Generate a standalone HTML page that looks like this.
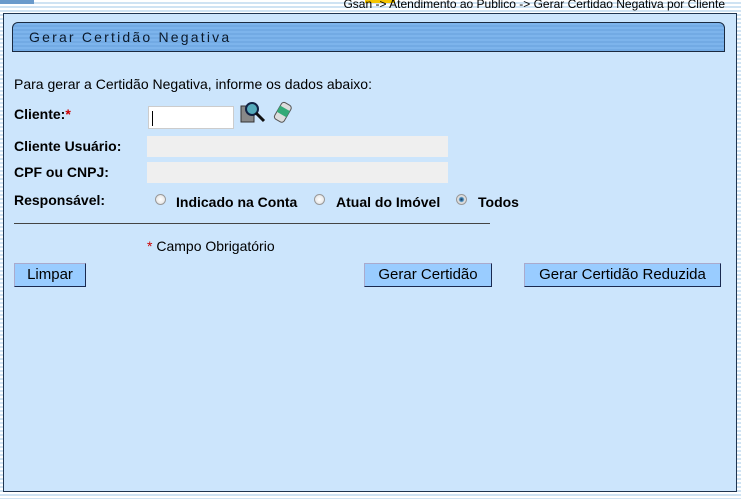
<!DOCTYPE html>
<html><head><meta charset="utf-8"><style>
body{margin:0;width:741px;height:499px;overflow:hidden;font-family:"Liberation Sans",sans-serif;
background:repeating-linear-gradient(to bottom,#fff 0,#fff 2px,#cfe3f3 2px,#cfe3f3 4px);position:relative}
.topbar{position:absolute;left:0;top:0;width:34px;height:4px;background:#6a9acb}
.yel{position:absolute;left:365px;top:0;width:30px;height:3px;background:#f5c400}
.crumb{position:absolute;right:16px;top:-3px;font-size:12px;color:#000;padding:0 0 0 4px;line-height:14px}
.panel{position:absolute;left:3px;top:13px;width:732px;height:477px;background:#cce5fc;border:1px solid #1f3550}
.hdr{position:absolute;left:8px;top:8px;width:711px;height:28px;border:1px solid #1a2a40;border-radius:6px 6px 0 0;
background:repeating-linear-gradient(to bottom,#7db4ec 0,#7db4ec 2px,#72aae4 2px,#72aae4 4px);}
.hdr span{position:absolute;left:16px;top:6px;font-size:14px;letter-spacing:2.2px;color:#0b1a2c}
.t{position:absolute;font-size:14px;color:#000}
.b{font-weight:bold}
.in{position:absolute;background:#efefef;height:21px}
.btn{position:absolute;height:22px;background:#99ccff;border:1px solid #1a2a50;border-top-color:#aac;border-left-color:#aac;font-size:15px;line-height:22px;text-align:center;color:#000}
.rad{position:absolute;width:9px;height:9px;border-radius:50%;border:1px solid #999;background:radial-gradient(#fff,#ddd)}
</style></head><body>
<div class="topbar"></div><div class="yel"></div>
<div class="crumb">Gsan -&gt; Atendimento ao Publico -&gt; Gerar Certidao Negativa por Cliente</div>
<div class="panel">
<div class="hdr"><span>Gerar Certidão Negativa</span></div>
</div>
<div class="t" style="left:14px;top:76px">Para gerar a Certidão Negativa, informe os dados abaixo:</div>
<div class="t b" style="left:14px;top:106px">Cliente:<span style="color:#c00">*</span></div>
<div style="position:absolute;left:148px;top:106px;width:86px;height:23px;background:#fff;border:1px solid #ccc;box-sizing:border-box"><div style="position:absolute;left:3px;top:4px;width:1px;height:15px;background:#000"></div></div>
<svg style="position:absolute;left:239px;top:100px" width="30" height="24"><rect x="2" y="6" width="13" height="16" fill="#888" stroke="#333"/><circle cx="13" cy="9" r="6" fill="#5ab" stroke="#124" stroke-width="2"/><line x1="17" y1="13" x2="25" y2="21" stroke="#111" stroke-width="3"/></svg>
<svg style="position:absolute;left:272px;top:100px" width="22" height="26"><g transform="rotate(30 11 13)"><rect x="5" y="3" width="11" height="19" rx="3" fill="#ddd" stroke="#555"/><rect x="5" y="8" width="11" height="7" fill="#3a7"/></g></svg>
<div class="t b" style="left:14px;top:138px">Cliente Usuário:</div>
<div class="in" style="left:147px;top:136px;width:301px"></div>
<div class="t b" style="left:14px;top:164px">CPF ou CNPJ:</div>
<div class="in" style="left:147px;top:162px;width:301px"></div>
<div class="t b" style="left:14px;top:192px">Responsável:</div>
<div class="rad" style="left:155px;top:194px"></div>
<div class="t b" style="left:176px;top:194px">Indicado na Conta</div>
<div class="rad" style="left:314px;top:194px"></div>
<div class="t b" style="left:336px;top:194px">Atual do Imóvel</div>
<div class="rad" style="left:456px;top:194px;background:radial-gradient(#135 0,#4a8fc0 2px,#ddd 3px)"></div>
<div class="t b" style="left:478px;top:194px">Todos</div>
<div style="position:absolute;left:14px;top:223px;width:476px;height:1px;background:#444"></div>
<div class="t" style="left:147px;top:238px"><span style="color:#c00">*</span> Campo Obrigatório</div>
<div class="btn" style="left:14px;top:263px;width:70px">Limpar</div>
<div class="btn" style="left:364px;top:263px;width:126px">Gerar Certidão</div>
<div class="btn" style="left:524px;top:263px;width:195px">Gerar Certidão Reduzida</div>
</body></html>
